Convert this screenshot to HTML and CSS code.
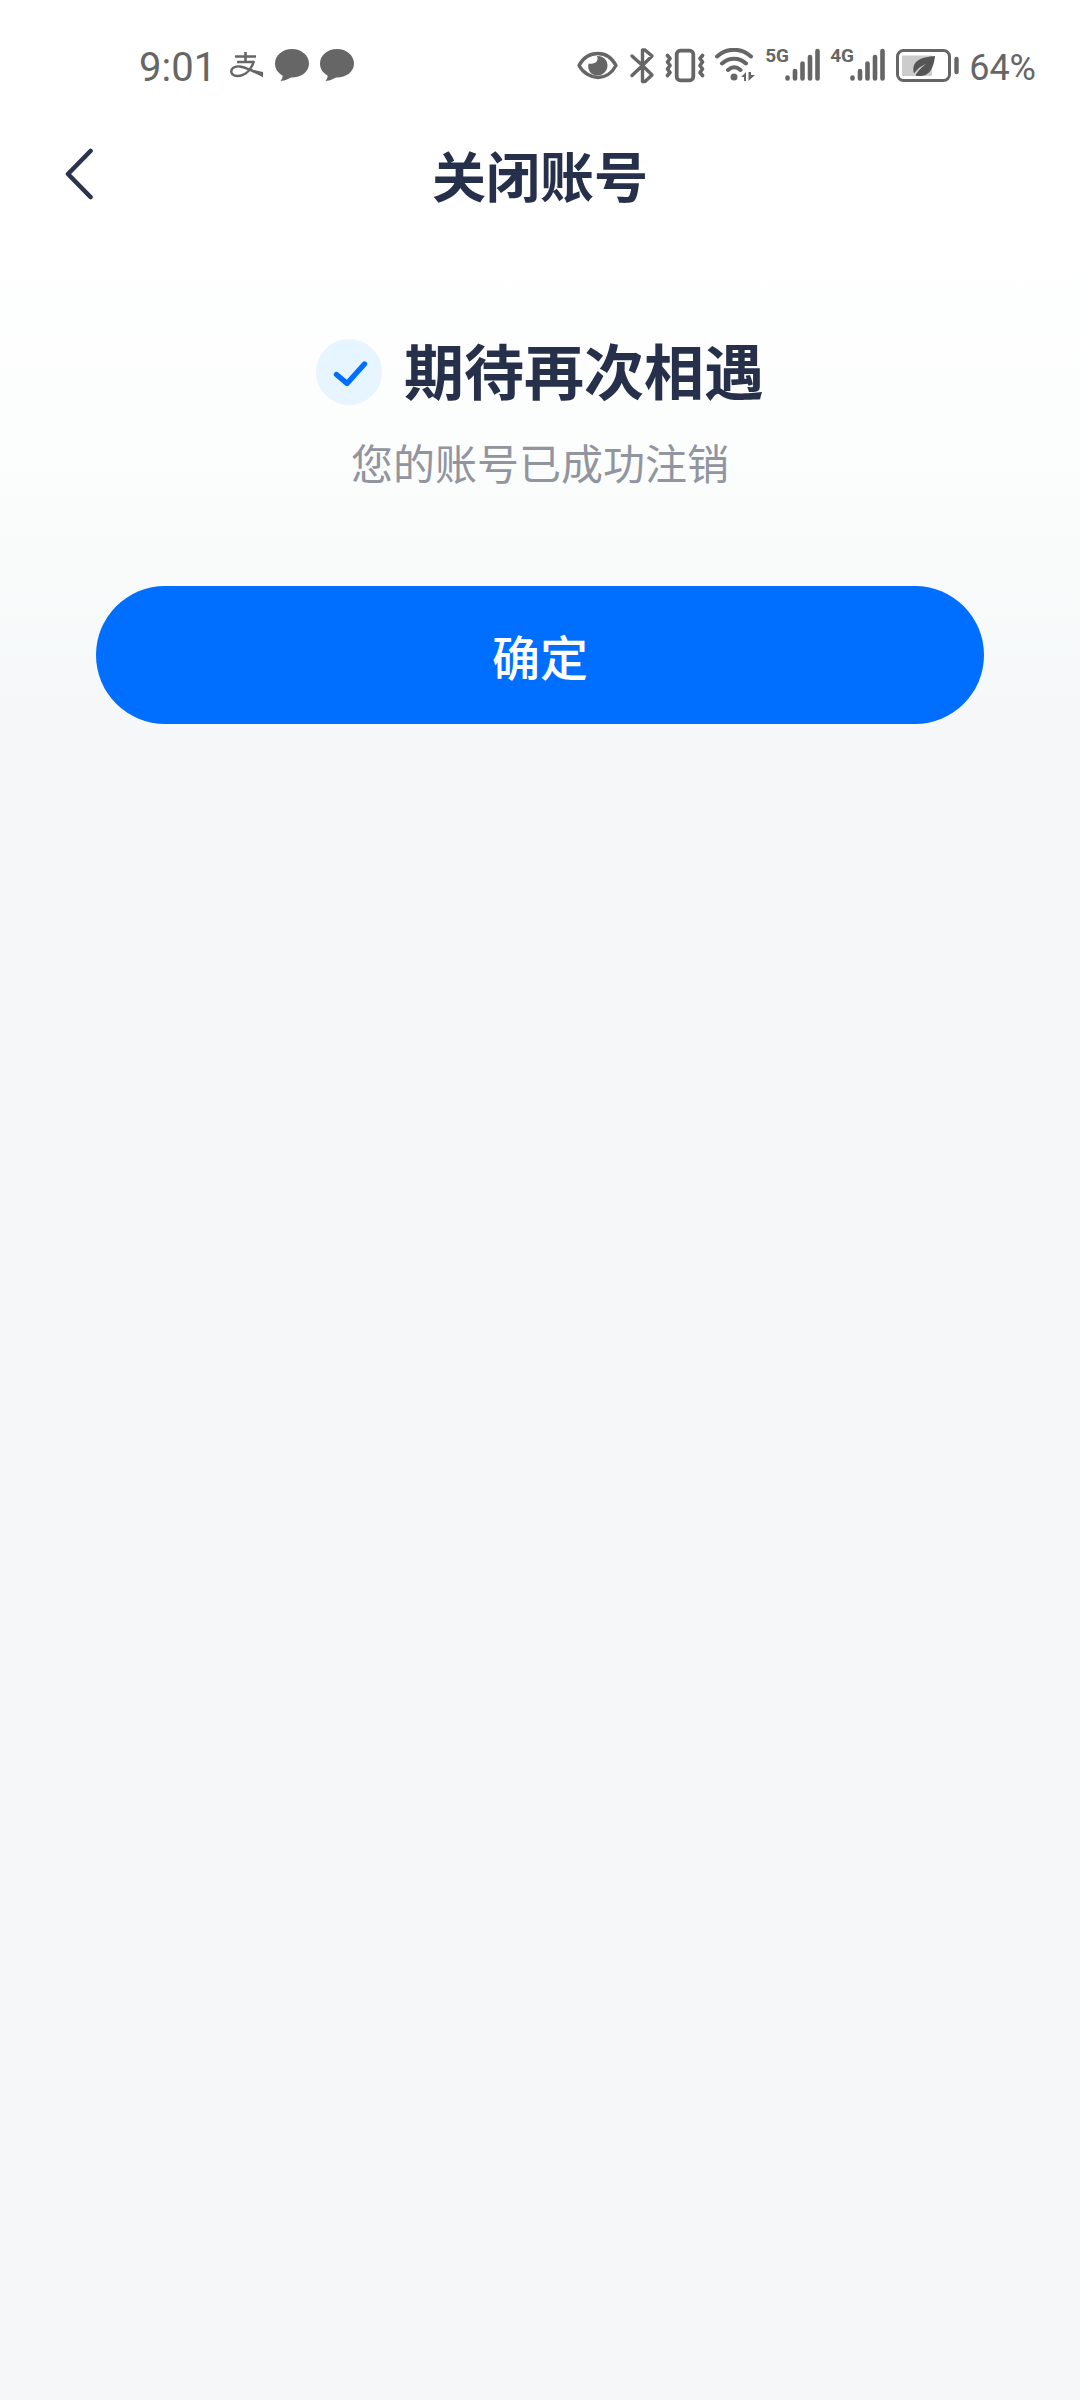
FILE: index.html
```html
<!DOCTYPE html>
<html lang="zh-CN">
<head>
<meta charset="utf-8">
<meta name="viewport" content="width=device-width, initial-scale=1">
<title>关闭账号</title>
<link rel="stylesheet" href="styles.css">
</head>
<body>
<div class="status-bar">
  <div class="status-left">
    <span class="status-text time">9:01</span>
    <div class="status-apps">
      <svg width="34" height="34" viewBox="0 0 34 34" fill="none" stroke="#666" aria-hidden="true">
        <path d="M5 7.500H26M7 13H24M15.500 3V13" stroke-width="2.600"/>
        <path d="M24 12C21 21 15 27 7.500 27C3 27 1 24.500 1.300 22C1.700 18.500 6 17 10 17.500C17 18.500 23 23 33 26" stroke-width="2.400"/>
        <path d="M20 20L33 23V28.500Z" fill="#666" stroke="none"/>
      </svg>
      <svg width="34" height="34" viewBox="0 0 34 34" aria-hidden="true"><path fill="#666" d="M17 0C7.600 0 0 6.300 0 14.500C0 20 3 24 7.500 26.500C8 28 7 30 5.500 32C11 31.500 13.500 29.500 16 28.500C26 28.700 34 23 34 14.500C34 6.300 26.400 0 17 0Z"/></svg>
      <svg width="34" height="34" viewBox="0 0 34 34" aria-hidden="true"><path fill="#666" d="M17 0C7.600 0 0 6.300 0 14.500C0 20 3 24 7.500 26.500C8 28 7 30 5.500 32C11 31.500 13.500 29.500 16 28.500C26 28.700 34 23 34 14.500C34 6.300 26.400 0 17 0Z"/></svg>
    </div>
  </div>
  <div class="status-right">
    <svg width="42" height="36" viewBox="0 0 42 36" aria-hidden="true">
      <path d="M2 17.500C6 10 13 5.500 21 5.500S35 10 39 17.500C35 25 28 29.500 21 29.500S6 25 2 17.500Z" fill="none" stroke="#666" stroke-width="3.400" stroke-linejoin="round"/>
      <path d="M20 8C22 12 19 17 11.500 15.500C10 22 14 27.500 20.500 27.500C26 27.500 30.500 23 30.500 17.500C30.500 12 26 7.500 20 8Z" fill="#666"/>
    </svg>
    <svg width="26" height="36" viewBox="0 0 26 36" fill="none" stroke="#666" stroke-width="3.400" stroke-linejoin="round" stroke-linecap="round" aria-hidden="true">
      <path d="M3 8L13.500 17.500L23 8L16 2H13.500V17.500L3 27.500M13.500 17.500L23 27L16 33.500H13.500V20"/>
    </svg>
    <svg width="40" height="36" viewBox="0 0 40 36" fill="none" stroke="#666" stroke-linejoin="round" stroke-linecap="round" aria-hidden="true">
      <rect x="11.700" y="2.700" width="16.600" height="29.600" rx="3.500" stroke-width="3.800"/>
      <path d="M2.500 7.500L5 10.500L2.500 14L5 17.500L2.500 21L5 24.500L2.500 27.500M37.500 7.500L35 10.500L37.500 14L35 17.500L37.500 21L35 24.500L37.500 27.500" stroke-width="3.600"/>
    </svg>
    <svg width="40" height="36" viewBox="0 0 40 36" fill="none" stroke="#666" stroke-width="4" stroke-linecap="round" aria-hidden="true">
      <path d="M2 8.500C12 -.5 26 -.5 36 8.500M7 15.500C14 9 24 9 31 15.500M13 22C17 18.500 21.500 18.500 25.500 22"/>
      <circle cx="19" cy="29" r="3.500" fill="#666" stroke="none"/>
      <path d="M26 29L31 24V33H29V29ZM33.500 24V33L40 27H36V24Z" fill="#666" stroke="none"/>
    </svg>
    <div class="signal">
      <span class="signal-label">5G</span>
      <svg width="35" height="36" viewBox="0 0 35 36" stroke="#666" stroke-width="4.600" stroke-linecap="round" aria-hidden="true"><path d="M2.500 29.500V30.500M10 23V30.500M17.500 15.500V30.500M25 9V30.500M32.500 3V30.500"/></svg>
    </div>
    <div class="signal">
      <span class="signal-label">4G</span>
      <svg width="35" height="36" viewBox="0 0 35 36" stroke="#666" stroke-width="4.600" stroke-linecap="round" aria-hidden="true"><path d="M2.500 29.500V30.500M10 23V30.500M17.500 15.500V30.500M25 9V30.500M32.500 3V30.500"/></svg>
    </div>
    <svg width="64" height="36" viewBox="0 0 64 36" aria-hidden="true">
      <rect x="2.500" y="2.500" width="52" height="30" rx="6" fill="none" stroke="#666" stroke-width="3"/>
      <rect x="7" y="7.500" width="30" height="20.500" fill="#ccc"/>
      <path d="M40 8C27 9 20 12 18.500 19C18 22 18.500 24 19 25.500C22 21 26 18 31 16C27 19 22 24 20.500 27.500C29 29.500 38 27 40 8Z" fill="#555"/>
      <path d="M61.500 11V24" stroke="#666" stroke-width="4.400" stroke-linecap="round"/>
    </svg>
    <span class="status-text">64%</span>
  </div>
</div>
<header class="nav">
  <button class="back" type="button" aria-label="返回">
    <svg width="30" height="54" viewBox="0 0 30 54" fill="none" stroke="#2a3350" stroke-width="4.600" stroke-linecap="round" stroke-linejoin="round" aria-hidden="true"><path d="M26.500 3L4 26L26.500 49"/></svg>
  </button>
  <h1 class="nav-title">关闭账号</h1>
</header>
<main class="content">
  <div class="result">
    <svg width="66" height="66" viewBox="0 0 66 66" fill="none" aria-hidden="true">
      <circle cx="33" cy="33" r="33" fill="#e6f5ff"/>
      <path d="M20.500 35.500L31 44.500L48.500 25" stroke="#006fff" stroke-width="5.400" stroke-linecap="round" stroke-linejoin="round"/>
    </svg>
    <h2 class="result-title">期待再次相遇</h2>
  </div>
  <p class="result-note">您的账号已成功注销</p>
  <button class="confirm" type="button">确定</button>
</main>
</body>
</html>
```
FILE: styles.css
```css
* {
  box-sizing: border-box;
}

body {
  margin: 0;
  min-height: 100vh;
  font-family: "Noto Sans CJK SC", sans-serif;
  color: #27304a;
  background: #f5f7f9 linear-gradient(#fff 200px, #fcfdfd 440px, #f8fbfa 580px, #f5f7f9 720px) no-repeat;
}

svg {
  display: block;
  flex: none;
}

.status-bar {
  display: flex;
  justify-content: space-between;
  align-items: center;
  height: 132px;
  padding: 0 44px 0 139px;
  color: #666;
}

.status-left,
.status-right,
.status-apps {
  display: flex;
  align-items: center;
}

.status-left {
  gap: 14px;
}

.status-apps {
  gap: 11px;
}

.status-right {
  gap: 10px;
}

.status-text {
  padding-top: 3px;
  font-family: Roboto, sans-serif;
  font-size: 36px;
  line-height: 40px;
}

.time {
  font-size: 40px;
}

.signal {
  display: flex;
  align-items: flex-start;
}

/* The label runs on above the shortest bars. */
.signal-label {
  width: 20px;
  font-family: Roboto, sans-serif;
  font-size: 19px;
  font-weight: 700;
  line-height: 16px;
  white-space: nowrap;
}

.nav {
  display: grid;
  grid-template-columns: 94px 1fr 94px;
  align-items: center;
  height: 86px;
}

.back {
  justify-self: end;
  padding: 0;
  border: 0;
  background: none;
}

.nav-title {
  margin: 0;
  font-size: 54px;
  font-weight: 700;
  line-height: 80px;
  text-align: center;
}

.content {
  padding: 110px 96px 0;
}

.result {
  display: flex;
  justify-content: center;
  align-items: center;
  gap: 22px;
  height: 88px;
}

.result-title {
  margin: 0;
  padding-bottom: 6px;
  font-size: 60px;
  font-weight: 700;
  line-height: 80px;
}

.result-note {
  margin: 14px 0 92px;
  font-size: 42px;
  line-height: 64px;
  text-align: center;
  color: #9295a0;
}

.confirm {
  display: block;
  width: 100%;
  height: 138px;
  border: 0;
  border-radius: 69px;
  background: #006fff;
  color: #fff;
  font-family: inherit;
  font-size: 48px;
  font-weight: 500;
}
```
